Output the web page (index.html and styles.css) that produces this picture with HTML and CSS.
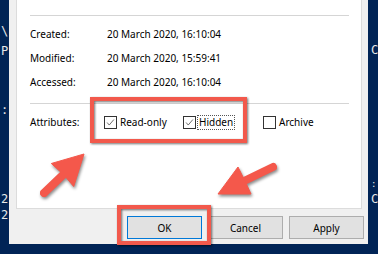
FILE: index.html
```html
<!DOCTYPE html>
<html>
<head>
<meta charset="utf-8">
<link rel="stylesheet" href="styles.css">
</head>
<body>
<div class="console console-left">
  <span class="c-line l1">\</span>
  <span class="c-line l2">P</span>
  <span class="c-line l3">:</span>
  <span class="c-line l4">2</span>
  <span class="c-line l5">2</span>
</div>
<div class="dialog">
  <div class="panel">
    <hr class="sep sep-top">
    <div class="info">
      <div class="label">Created:</div><div class="value">20 March 2020, 16:10:04</div>
      <div class="label">Modified:</div><div class="value">20 March 2020, 15:59:41</div>
      <div class="label">Accessed:</div><div class="value">20 March 2020, 16:10:04</div>
    </div>
    <hr class="sep sep-mid">
    <div class="attrs">
      <div class="label">Attributes:</div>
      <div class="checks">
        <label class="check"><span class="box checked"><svg viewBox="0 0 13 13"><polyline points="2.5,6.5 5,9.5 10.5,3" /></svg></span><span class="ctext">Read-only</span></label>
        <label class="check"><span class="box checked"><svg viewBox="0 0 13 13"><polyline points="2.5,6.5 5,9.5 10.5,3" /></svg></span><span class="ctext focus">Hidden</span></label>
        <label class="check"><span class="box"></span><span class="ctext">Archive</span></label>
      </div>
    </div>
  </div>
  <div class="buttons">
    <button class="btn default">OK</button>
    <button class="btn">Cancel</button>
    <button class="btn">Apply</button>
  </div>
</div>
<div class="console console-right">
  <span class="c-line r1">C</span>
  <span class="c-line r2">:</span>
  <span class="c-line r3">C</span>
</div>
<svg class="annot" width="378" height="254" viewBox="0 0 378 254">
  <g class="mark">
    <rect x="92" y="99" width="153" height="42" />
    <rect x="119" y="207" width="90" height="36" />
  </g>
  <g class="arrow">
    <line x1="44" y1="193" x2="66" y2="172" />
    <polygon points="84,154 73.7,186.5 64,175 51.3,163.5" />
    <line x1="273" y1="167" x2="242" y2="182" />
    <polygon points="218,194 238,167 245,181 251,194" />
  </g>
</svg>
</body>
</html>
```
FILE: styles.css
```css
html, body {
  margin: 0;
  padding: 0;
}
body {
  width: 378px;
  height: 254px;
  overflow: hidden;
  background: #012456;
  display: flex;
  align-items: flex-start;
  position: relative;
  font-family: "Noto Sans", "Open Sans", sans-serif;
  font-size: 10px;
  color: #000;
}
.console {
  height: 254px;
  overflow: hidden;
  display: flex;
  flex-direction: column;
  font-family: "DejaVu Sans Mono", monospace;
  font-size: 12px;
  line-height: 12px;
  color: #e8e8e8;
  white-space: nowrap;
}
.console-left {
  width: 9px;
  flex: none;
}
.console-left .c-line { margin-left: 1px; }
.l1 { margin-top: 25px; }
.l2 { margin-top: 8px; }
.l3 { margin-top: 47px; }
.l4 { margin-top: 77px; }
.l5 { margin-top: 4px; }
.console-right {
  width: 10px;
  flex: none;
}
.console-right .c-line { margin-left: 3px; }
.r1 { margin-top: 44px; }
.r2 { margin-top: 124px; font-size: 9px; line-height: 9px; }
.r3 { margin-top: 4px; }

.dialog {
  width: 359px;
  height: 244px;
  flex: none;
  background: #f0f0f0;
  box-sizing: border-box;
  padding: 0 6px 0 7px;
  display: flex;
  flex-direction: column;
}
.panel {
  height: 209px;
  background: #fff;
  border: 1px solid #dcdcdc;
  border-top: none;
  box-sizing: border-box;
  padding: 0 12px 0 13px;
}
.sep {
  border: none;
  height: 1px;
  background: #d5d5d5;
  margin: 0;
}
.sep-top { margin-top: 15px; }
.sep-mid { margin-top: 9px; }
.info {
  display: grid;
  grid-template-columns: 77px 1fr;
  grid-auto-rows: 24px;
  align-items: center;
  margin-top: 6px;
}
.attrs {
  display: grid;
  grid-template-columns: 74px 1fr;
  height: 24px;
  align-items: center;
  margin-top: 6px;
}
.checks {
  display: grid;
  grid-template-columns: 79px 80px 80px;
  align-items: center;
}
.check {
  display: flex;
  align-items: center;
  gap: 2px;
}
.box {
  width: 13px;
  height: 13px;
  box-sizing: border-box;
  border: 1px solid #333;
  background: #fff;
  display: block;
  flex: none;
}
.box svg {
  display: block;
  width: 11px;
  height: 11px;
}
.box polyline {
  fill: none;
  stroke: #555;
  stroke-width: 1;
}
.ctext {
  padding: 0 1px;
  line-height: 13px;
}
.ctext.focus {
  outline: 1px dotted #555;
  outline-offset: 0;
}
.buttons {
  height: 35px;
  display: flex;
  justify-content: flex-end;
  align-items: flex-start;
  gap: 6px;
  padding-top: 7px;
  box-sizing: border-box;
  margin-right: -2px;
}
.btn {
  width: 75px;
  height: 23px;
  box-sizing: border-box;
  background: #e1e1e1;
  border: 1px solid #adadad;
  font-family: "Noto Sans", "Open Sans", sans-serif;
  font-size: 10px;
  color: #000;
  padding: 0;
}
.btn.default {
  border: 1px solid #0078d7;
}
.annot {
  position: absolute;
  left: 0;
  top: 0;
  pointer-events: none;
}
.mark rect {
  fill: none;
  stroke: #f2594c;
  stroke-width: 4;
  filter: drop-shadow(1px 1px 1px rgba(0,0,0,0.55));
}
.arrow {
  filter: drop-shadow(1px 2px 1.5px rgba(0,0,0,0.45));
}
.arrow line {
  stroke: #f4584b;
  stroke-width: 8;
  stroke-linecap: round;
}
.arrow polygon {
  fill: #f4584b;
  stroke: #f4584b;
  stroke-width: 1;
  stroke-linejoin: round;
}
```
